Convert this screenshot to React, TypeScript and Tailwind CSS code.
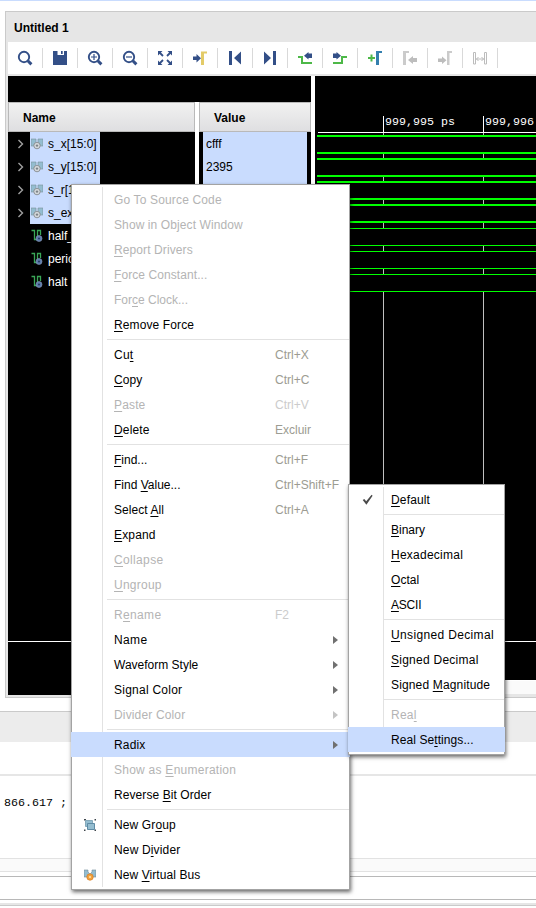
import React from "react";

type Item = {
  text: string;
  // index of the underlined mnemonic character
  mnemonic?: number;
  shortcut?: string;
  off?: boolean;
  sub?: boolean;
  active?: boolean;
  icon?: React.ReactNode;
  tracking?: string;
};

const NAVY = "#334f87";
const GREEN = "#4db848";
const GREY = "#bdbdbd";

function Glyph({ children }: { children: React.ReactNode }) {
  return (
    <div className="flex h-8 w-[35px] shrink-0 items-center">
      <svg width="16" height="16" viewBox="0 0 16 16" className="ml-[9px] shrink-0" fill="none">
        {children}
      </svg>
      <div className="ml-[9px] h-5 w-px bg-[#d9d9d9]" />
    </div>
  );
}

function Lens({ children }: { children?: React.ReactNode }) {
  return (
    <>
      <circle cx="7" cy="7" r="5.2" stroke={NAVY} strokeWidth="1.9" />
      <path d="M10.8 10.8L14.4 14.4" stroke={NAVY} strokeWidth="3" />
      {children}
    </>
  );
}

function Toolbar() {
  return (
    <div className="flex h-8 shrink-0 bg-white">
      <Glyph><Lens /></Glyph>
      <Glyph>
        <path d="M1 1H5.5V5H12V1H15V15H1Z" fill={NAVY} />
        <path d="M9 1H10.7V4H9Z" fill={NAVY} />
      </Glyph>
      <Glyph><Lens><path d="M4 7H10M7 4V10" stroke={NAVY} strokeWidth="1.2" /></Lens></Glyph>
      <Glyph><Lens><path d="M4 7H10" stroke={NAVY} strokeWidth="1.2" /></Lens></Glyph>
      <Glyph>
        <path d="M1 1H5.5L1 5.5ZM15 1V5.5L10.5 1ZM1 15V10.5L5.5 15ZM15 15H10.5L15 10.5Z" fill={NAVY} />
        <path d="M2 2L6 6M14 2L10 6M2 14L6 10M14 14L10 10" stroke={NAVY} strokeWidth="1.8" />
      </Glyph>
      <Glyph>
        <path d="M1 6.5H4.5V4L9 8.2L4.5 12.4V10H1Z" fill={NAVY} />
        <path d="M9 15V1.5H15V3.5H12V15Z" fill="#e3cb68" />
      </Glyph>
      <Glyph>
        <path d="M2 1H5V15H2ZM14 1.5V14.5L7 8Z" fill={NAVY} />
      </Glyph>
      <Glyph>
        <path d="M11 1H14V15H11ZM2 1.5V14.5L9 8Z" fill={NAVY} />
      </Glyph>
      <Glyph>
        <path d="M1 7H5V13H15" stroke={GREEN} strokeWidth="2" />
        <path d="M15 3.5V8H11.5V9.5L7 5.7L11.5 2V3.5Z" fill={NAVY} />
      </Glyph>
      <Glyph>
        <path d="M1 13H10V7H15" stroke={GREEN} strokeWidth="2" />
        <path d="M1 3.5V8H4.5V9.5L9 5.7L4.5 2V3.5Z" fill={NAVY} />
      </Glyph>
      <Glyph>
        <path d="M1 8H8M4.5 4.5V11.5" stroke={GREEN} strokeWidth="2" />
        <path d="M9 15V1H15V3H12V15Z" fill="#347fae" />
      </Glyph>
      <Glyph>
        <path d="M1 15V1H7V3H4V15Z" fill="#cbcbcb" />
        <path d="M15 8V12H11V14L6 10L11 6V8Z" fill={GREY} />
      </Glyph>
      <Glyph>
        <path d="M1 8.5V12H5V14L9.5 10.2L5 6.5V8.5Z" fill={GREY} />
        <path d="M10 15V1H15V3H12.5V15Z" fill="#cbcbcb" />
      </Glyph>
      <Glyph>
        <path d="M1.5 2.5H3.5V14H1.5ZM12.5 2.5H14.5V14H12.5ZM4 9H12M6.5 7L4.5 9L6.5 11M9.5 7L11.5 9L9.5 11" stroke="#bcbcbc" />
      </Glyph>
    </div>
  );
}

function BusIcon() {
  return (
    <svg width="12" height="12" viewBox="0 0 12 12" className="shrink-0">
      <path d="M0 1H5V4L3 6V8H0ZM7 1H12V8H9V6L7 4Z" fill="#94bdd0" stroke="#7b9099" strokeWidth=".6" />
      <circle cx="6" cy="7.6" r="3.2" fill="#d5d9dc" stroke="#8e9499" strokeWidth="1" />
      <circle cx="6" cy="7.6" r="1.2" fill="#7d8388" />
    </svg>
  );
}

function VirtualBusIcon() {
  return (
    <svg width="12" height="12" viewBox="0 0 12 12" className="shrink-0">
      <path d="M0 1H4V3L6 5L8 3V1H12V8H0Z" fill="#94bdd0" stroke="#6f8b98" strokeWidth=".6" />
      <circle cx="6" cy="8" r="3.2" fill="#f3a33c" stroke="#d9822b" strokeWidth=".8" />
      <circle cx="6" cy="8" r="1.1" fill="#fbe0b0" />
    </svg>
  );
}

function ScalarIcon() {
  return (
    <svg width="12" height="13" viewBox="0 0 12 13" fill="none" className="shrink-0">
      <path d="M0.5 1.5H3.5V10.5H6.5V1.5H9.5V6" stroke="#3aa757" strokeWidth="1.3" />
      <circle cx="8" cy="9.5" r="3" fill="#5d7bab" stroke="#8a9bb8" strokeWidth=".6" />
      <circle cx="8" cy="9.5" r="1" fill="#253a5e" />
    </svg>
  );
}

function GroupIcon() {
  return (
    <svg width="12" height="12" viewBox="0 0 12 12" className="shrink-0">
      <path d="M0 0H2V1.5H0ZM10.5 0H12V1.5H10.5ZM0 10.5H1.5V12H0ZM10.5 10.5H12V12H10.5Z" fill="#3f464c" />
      <path d="M1.5 1.5H8.5V7.5H1.5Z" fill="#94bdd0" stroke="#85a9ba" />
      <path d="M3.5 4.5H10.5V10.5H3.5Z" fill="#94bdd0" stroke="#5f8ba5" />
    </svg>
  );
}

const signals = [
  { name: "s_x[15:0]", bus: true },
  { name: "s_y[15:0]", bus: true },
  { name: "s_r[15:0]", bus: true },
  { name: "s_ex", bus: true },
  { name: "half_", bus: false },
  { name: "period", bus: false },
  { name: "halt", bus: false },
];

function SignalRow({ name, bus }: { name: string; bus: boolean }) {
  return (
    <div className="flex h-[23px]">
      <div className="flex w-[22px] items-center pl-[9px]">
        {bus && (
          <svg width="7" height="10" viewBox="0 0 7 10" fill="none">
            <path d="M1.5 1L5.5 5L1.5 9" stroke="#a0a0a0" strokeWidth="1.4" />
          </svg>
        )}
      </div>
      <div
        className={
          bus
            ? "flex w-[70px] items-center bg-[#c9dcfe] pl-px text-black"
            : "flex w-[70px] items-center pl-px text-white"
        }
      >
        {bus ? <BusIcon /> : <ScalarIcon />}
        <span className="ml-[5px]">{name}</span>
      </div>
    </div>
  );
}

// y ranges are relative to the wave panel's top edge
const lanes = [
  { top: 59, bottom: 78, line: 2 },
  { top: 82, bottom: 101, line: 2 },
  { top: 105, bottom: 124, line: 2 },
  { top: 128, bottom: 147, line: 2 },
  { top: 152, bottom: 170, line: 1 },
  { top: 175, bottom: 193, line: 1 },
  { top: 198, bottom: 216, line: 1 },
];

function Wave() {
  return (
    <svg width="221" height="604" className="block bg-black" shapeRendering="crispEdges">
      {[68, 168].map((x) => (
        <g key={x}>
          <rect x={x} y="57" width="1" height="508" fill="#c0c0c0" />
          <rect x={x} y="40" width="1" height="17" fill="#fff" />
        </g>
      ))}
      <rect x="3" y="56" width="218" height="1" fill="#fff" />
      {lanes.map((l) => (
        <g key={l.top}>
          <rect x="2" y={l.top} width="219" height={l.bottom - l.top} fill="#000" />
          <rect x="2" y={l.top} width="219" height={l.line} fill="#0f0" />
          <rect x="2" y={l.bottom - l.line} width="219" height={l.line} fill="#0f0" />
        </g>
      ))}
      <rect x="0" y="565" width="221" height="1" fill="#fff" />
      <g fill="#fff" fontSize="11.67" fontFamily="'Liberation Mono', monospace">
        <text x="70" y="49">999,995 ps</text>
        <text x="170" y="49">999,996</text>
      </g>
    </svg>
  );
}

function Label({ text, mnemonic }: { text: string; mnemonic?: number }) {
  if (mnemonic === undefined) return <>{text}</>;
  return (
    <>
      {text.slice(0, mnemonic)}
      <span className="underline decoration-1 underline-offset-2">{text[mnemonic]}</span>
      {text.slice(mnemonic + 1)}
    </>
  );
}

const mainMenu: Item[][] = [
  [
    { text: "Go To Source Code", off: true, tracking: "tracking-[0.15px]" },
    { text: "Show in Object Window", off: true, tracking: "tracking-[0.1px]" },
    { text: "Report Drivers", mnemonic: 0, off: true, tracking: "tracking-[0.1px]" },
    { text: "Force Constant...", mnemonic: 0, off: true, tracking: "tracking-[0.08px]" },
    { text: "Force Clock...", mnemonic: 3, off: true, tracking: "tracking-[0px]" },
    { text: "Remove Force", mnemonic: 0, tracking: "tracking-[0.12px]" },
  ],
  [
    { text: "Cut", mnemonic: 2, shortcut: "Ctrl+X" },
    { text: "Copy", mnemonic: 0, shortcut: "Ctrl+C", tracking: "tracking-[0.1px]" },
    { text: "Paste", mnemonic: 0, shortcut: "Ctrl+V", off: true, tracking: "tracking-[0.15px]" },
    { text: "Delete", mnemonic: 0, shortcut: "Excluir", tracking: "tracking-[0.15px]" },
  ],
  [
    { text: "Find...", mnemonic: 0, shortcut: "Ctrl+F", tracking: "tracking-[0px]" },
    { text: "Find Value...", mnemonic: 5, shortcut: "Ctrl+Shift+F", tracking: "tracking-[0px]" },
    { text: "Select All", mnemonic: 7, shortcut: "Ctrl+A", tracking: "tracking-[0.05px]" },
    { text: "Expand", mnemonic: 0, tracking: "tracking-[0.15px]" },
    { text: "Collapse", mnemonic: 0, off: true, tracking: "tracking-[0.35px]" },
    { text: "Ungroup", mnemonic: 0, off: true },
  ],
  [
    { text: "Rename", mnemonic: 1, shortcut: "F2", off: true, tracking: "tracking-[0.35px]" },
    { text: "Name", sub: true, tracking: "tracking-[0.35px]" },
    { text: "Waveform Style", sub: true, tracking: "tracking-[0px]" },
    { text: "Signal Color", sub: true },
    { text: "Divider Color", sub: true, off: true, tracking: "tracking-[0.15px]" },
  ],
  [
    { text: "Radix", sub: true, active: true, tracking: "tracking-[0.15px]" },
    { text: "Show as Enumeration", mnemonic: 8, off: true },
    { text: "Reverse Bit Order", mnemonic: 8, tracking: "tracking-[0.08px]" },
  ],
  [
    { text: "New Group", mnemonic: 6, icon: <GroupIcon />, tracking: "tracking-[0.12px]" },
    { text: "New Divider", mnemonic: 5, tracking: "tracking-[0.15px]" },
    { text: "New Virtual Bus", mnemonic: 4, icon: <VirtualBusIcon />, tracking: "tracking-[0.08px]" },
  ],
];

const radixMenu: Item[][] = [
  [
    {
      text: "Default",
      mnemonic: 0,
      tracking: "tracking-[0.15px]",
      icon: (
        <svg width="12" height="12" viewBox="0 0 12 12" fill="none">
          <path d="M0.7 6L2.3 5L4.2 7.2L9.6 0.8L10.6 1.8L4.4 10.8Z" fill="#4a4a4a" />
        </svg>
      ),
    },
  ],
  [
    { text: "Binary", mnemonic: 0, tracking: "tracking-[0px]" },
    { text: "Hexadecimal", mnemonic: 0 },
    { text: "Octal", mnemonic: 0, tracking: "tracking-[0.05px]" },
    { text: "ASCII", mnemonic: 0, tracking: "tracking-[-0.2px]" },
  ],
  [
    { text: "Unsigned Decimal", mnemonic: 0, tracking: "tracking-[0.35px]" },
    { text: "Signed Decimal", mnemonic: 0 },
    { text: "Signed Magnitude", mnemonic: 7, tracking: "tracking-[0.15px]" },
  ],
  [
    { text: "Real", mnemonic: 3, off: true },
    { text: "Real Settings...", mnemonic: 7, active: true, tracking: "tracking-[0.08px]" },
  ],
];

function MenuRow({ item, nested }: { item: Item; nested?: boolean }) {
  return (
    <div
      className={
        "relative -mx-px flex h-[25px] items-center " +
        (item.active ? "bg-[#c9dcfe] " : "") +
        (item.off ? "text-[#b4b4b4]" : "text-black")
      }
    >
      <div className={nested ? "flex w-[43px] pl-[14px]" : "flex w-[43px] pl-[13px]"}>{item.icon}</div>
      <div className={(nested ? "flex-1 " : "w-[161px] ") + (item.tracking ?? "tracking-[0.25px]")}>
        <Label text={item.text} mnemonic={item.mnemonic} />
      </div>
      {!nested && (
        <div className={item.off ? "flex-1 text-[#cccccc]" : "flex-1 text-[#9c9c92]"}>{item.shortcut}</div>
      )}
      {item.sub && (
        <svg width="5" height="8" viewBox="0 0 5 8" className="mr-3">
          <path d="M0 0L5 4L0 8Z" fill={item.off ? "#c4c4c4" : "#707070"} />
        </svg>
      )}
    </div>
  );
}

function Menu({ groups, nested }: { groups: Item[][]; nested?: boolean }) {
  return (
    <div className="relative border border-[#a3a3a3] bg-white py-[2px] shadow-[1px_2px_4px_rgba(0,0,0,0.6)]">
      <div
        className={
          nested
            ? "absolute bottom-[2px] left-[34px] top-[2px] w-px bg-[#e2e2e2]"
            : "absolute bottom-[2px] left-[30px] top-[2px] w-px bg-[#e2e2e2]"
        }
      />
      {groups.map((g, i) => (
        <React.Fragment key={i}>
          {i > 0 && (
            <div className={nested ? "flex h-[5px] items-center pl-[34px]" : "flex h-[5px] items-center pl-[35px]"}>
              <div className="h-px w-full bg-[#e2e2e2]" />
            </div>
          )}
          {g.map((it) => (
            <MenuRow key={it.text} item={it} nested={nested} />
          ))}
        </React.Fragment>
      ))}
    </div>
  );
}

const headerCell =
  "flex h-[30px] items-center border border-[#b9b9b9] bg-linear-to-b from-[#f1f1f1] to-[#dfdfe1] pt-px font-bold";

export default function App() {
  return (
    <div className="relative flex h-[908px] w-[536px] flex-col overflow-hidden bg-white font-['Liberation_Sans',Arial,sans-serif] text-[12px] leading-[14px] text-black">
      <div className="h-px shrink-0 bg-[#c9dcfe]" />
      <div className="ml-[5px] mt-[10px] flex h-[687px] shrink-0 flex-col border-y border-l border-[#cacaca] bg-[#e6e6e6] pl-[2px]">
        <div className="flex h-[30px] shrink-0 items-center pl-[6px] pt-[2px] font-bold">Untitled 1</div>
        <Toolbar />
        <div className="mt-[2px] flex">
          <div className="w-[303px] shrink-0 bg-white">
            <div className="h-[26px] bg-black" />
            <div className="flex gap-1">
              <div className={headerCell + " w-[187px] pl-[14px]"}>Name</div>
              <div className={headerCell + " w-[112px] pl-[14px]"}>Value</div>
            </div>
            <div className="flex h-[563px] gap-1">
              <div className="flex w-[187px] flex-col bg-black">
                {signals.map((s) => (
                  <SignalRow key={s.name} {...s} />
                ))}
                <div className="mt-[348px] h-px bg-white" />
              </div>
              <div className="w-[112px] bg-black px-1">
                <div className="h-[92px] bg-[#c9dcfe] pl-[3px]">
                  <div className="flex h-[23px] items-center">cfff</div>
                  <div className="flex h-[23px] items-center">2395</div>
                </div>
              </div>
            </div>
          </div>
          <div className="w-1 shrink-0 bg-white" />
          <div className="flex-1">
            <Wave />
            <div className="h-[14px] border-t border-white bg-[#fafafa]" />
          </div>
        </div>
      </div>
      <div className="mt-[13px] h-[31px] shrink-0 border-t border-[#cacaca] bg-[#ececec]" />
      <div className="mt-8 h-[2px] shrink-0 bg-[#e6e6e6]" />
      <div className="flex h-[82px] shrink-0 pl-1 pt-[20px] font-['Liberation_Mono',monospace] text-[11.67px]">
        866.617 ;
      </div>
      <div className="h-[14px] shrink-0 border-y border-[#e2e2e2] bg-[#fafafa]" />
      <div className="mt-1 h-6 shrink-0 border-y border-[#b8b8b8]" />
      <div className="mt-[3px] h-[2px] shrink-0 bg-[#e6e6e6]" />
      <div className="h-px shrink-0 bg-[#cacaca]" />

      <div className="absolute left-[71px] top-[184px] w-[279px]">
        <Menu groups={mainMenu} />
      </div>
      <div className="absolute left-[348px] top-[484px] w-[157px]">
        <Menu groups={radixMenu} nested />
      </div>
    </div>
  );
}
